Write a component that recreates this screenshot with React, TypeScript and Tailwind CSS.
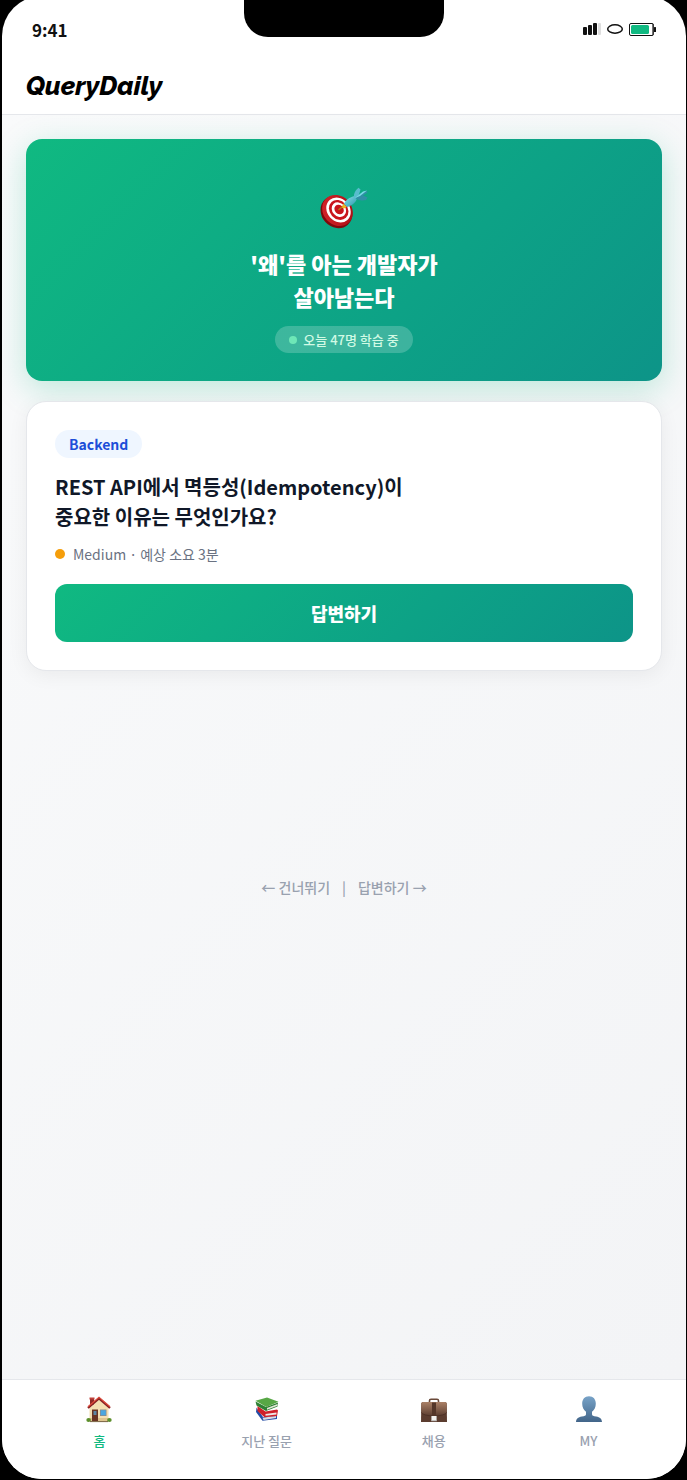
import React from "react";

function DartIcon() {
  return (
    <svg width="50" height="48" viewBox="0 0 50 48" role="img" aria-label="다트">
      <defs>
        <linearGradient id="rim" x1="0" y1="0" x2="1" y2="1">
          <stop offset="0" stopColor="#d8262c" />
          <stop offset="1" stopColor="#a80c12" />
        </linearGradient>
        <linearGradient id="dart" x1="0" y1="0" x2="1" y2="1">
          <stop offset="0" stopColor="#8be3ec" />
          <stop offset="1" stopColor="#2795ab" />
        </linearGradient>
      </defs>
      <ellipse cx="17.5" cy="25" rx="15" ry="17" transform="rotate(-42 17.5 25)" fill="#7e090d" />
      <ellipse cx="18.5" cy="23.5" rx="14.3" ry="16.5" transform="rotate(-42 18.5 23.5)" fill="url(#rim)" />
      <ellipse cx="19.5" cy="23" rx="11.3" ry="13.3" transform="rotate(-42 19.5 23)" fill="#fff" />
      <ellipse cx="19.7" cy="22.9" rx="9" ry="10.7" transform="rotate(-42 19.7 22.9)" fill="#c9151b" />
      <ellipse cx="19.9" cy="22.7" rx="6.6" ry="7.9" transform="rotate(-42 19.9 22.7)" fill="#fff" />
      <ellipse cx="20.1" cy="22.5" rx="4.3" ry="5.2" transform="rotate(-42 20.1 22.5)" fill="#c9151b" />
      <path d="M20 22.5 25 18.5" stroke="#b97b17" strokeWidth="1.6" strokeLinecap="round" />
      <path d="M23 20.6 24.4 16.6 27.8 19.8 25 21.6Z" fill="#f0b41f" />
      <path d="M25 17C26 13.5 31 10 35.5 9L38 11.5C37 15.5 32 19 28.3 20Z" fill="url(#dart)" />
      <path d="M35 10.5C34.5 6.5 36.5 3 39.5 .8L41.5 2.5 39.5 9 36.5 12Z" fill="#58bccd" />
      <path d="M36.5 11.5 41 7 47.5 3.5 48.5 5.5 44 8.5 48.5 10.5 47 13C43 14 39.5 13.5 36.5 11.5Z" fill="#318fa6" />
      <path d="M36 11 44 4.5 48 3.5 41 9Z" fill="#79dbe6" />
    </svg>
  );
}

function HouseIcon() {
  return (
    <svg width="26" height="28" viewBox="1 0 26 28" aria-hidden="true">
      <path d="M5 2h4v7H5Z" fill="#8f2926" />
      <path d="M4.5 1.5h5v2h-5Z" fill="#bf403a" />
      <path d="M4.5 12 14 3.5l9.5 8.5v13h-19Z" fill="#f4dfb3" />
      <path d="M4.5 22h19v3h-19Z" fill="#dfc48f" />
      <path d="M3 12 14 2.5 25 12" fill="none" stroke="#871f20" strokeWidth="2.2" />
      <path d="M3 10.8 14 1.3 25 10.8" fill="none" stroke="#dc4a3c" strokeWidth="1.3" />
      <path d="M7 13.5h6V25H7Z" fill="#693524" />
      <path d="M8.5 15h3v4h-3Z" fill="#5d86a5" />
      <path d="M15 13.5h6.5v6.5H15Z" fill="#8a8a8b" />
      <path d="M15.7 14.2h5.1v5.1h-5.1Z" fill="#4aa6e1" />
      <ellipse cx="3.6" cy="24" rx="2.3" ry="2" fill="#5d8f2c" />
      <ellipse cx="24.4" cy="24" rx="2.3" ry="2" fill="#5d8f2c" />
      <path d="M5 25.6h18" stroke="#775f3c" strokeWidth="1" />
    </svg>
  );
}

function BooksIcon() {
  return (
    <svg width="26" height="28" viewBox="1 0 26 28" aria-hidden="true">
      <path d="M3.5 11.5 3 16 9.5 24.8 24 23v-3L10 21 5 14Z" fill="#254da6" />
      <path d="m9.5 21.8 13.5-1.8v2L10.5 23.9Z" fill="#d9dce3" />
      <path d="m4.5 10 8 5.5 11.5-2 1 1-1 5.5-12.5 1.2L4.5 15Z" fill="#cf2029" />
      <path d="m12.5 18 11-1.4v1.9l-11 1.3Z" fill="#eee7e5" />
      <path d="M2.5 5.5 13 11 25 6.5l-.5 4-11.5 4.5L3.5 9.5Z" fill="#2e8033" />
      <path d="m14 12 10.5-4v1.7l-10.5 4Z" fill="#e4e6d9" />
      <path d="M2.5 4.8 14 1.5 25.5 5.8 13.4 11Z" fill="#57a745" />
    </svg>
  );
}

function BriefcaseIcon() {
  return (
    <svg width="26" height="28" viewBox="1 0 26 28" aria-hidden="true">
      <defs>
        <linearGradient id="leather" x1="0" y1="0" x2="0" y2="1">
          <stop offset="0" stopColor="#aa8066" />
          <stop offset=".55" stopColor="#805c49" />
          <stop offset="1" stopColor="#5b3d30" />
        </linearGradient>
      </defs>
      <path d="M9.5 6.5V4.8Q9.5 3.3 11 3.3h6q1.5 0 1.5 1.5v1.7" fill="none" stroke="#6a4939" strokeWidth="1.6" />
      <path d="M3 6h22q1.5 0 1.7 1.5L27 26H1L1.3 7.5Q1.5 6 3 6Z" fill="#5b3c2f" />
      <path d="M3 6h22q1.5 0 1.7 1.5v9Q25 19.6 14 20 3 19.6 1.3 16.5v-9Q1.5 6 3 6Z" fill="url(#leather)" />
      <path d="M1.4 16.5Q3 19.6 14 20q11-.4 12.6-3.5" fill="none" stroke="#462b21" strokeWidth=".7" />
      <path d="M12 6.5h4v13h-4Z" fill="#543629" />
      <path d="M11.2 20h5.6v5.2h-5.6Z" fill="#c5c2c0" />
      <path d="M12 20h4v4h-4Z" fill="#f3f1ef" />
    </svg>
  );
}

function PersonIcon() {
  return (
    <svg width="26" height="28" viewBox="1 0 26 28" aria-hidden="true">
      <defs>
        <linearGradient id="person" x1="0" y1="0" x2="0" y2="1">
          <stop offset="0" stopColor="#78a3c8" />
          <stop offset="1" stopColor="#426589" />
        </linearGradient>
      </defs>
      <path
        d="M14 .3c4.4 0 6.8 3 6.8 7.4 0 3.4-1.500 6.400-3.800 8.100v2.400c0 1.400 1.500 1.800 4.200 2.400 3.900.8 5.500 2.100 5.800 5.400H1c.3-3.300 1.900-4.600 5.800-5.400 2.700-.6 4.200-1 4.200-2.400v-2.400c-2.300-1.700-3.800-4.700-3.800-8.100C7.200 3.300 9.600.3 14 .3Z"
        fill="url(#person)"
      />
    </svg>
  );
}

function StatusIcons() {
  return (
    <svg width="73" height="13" viewBox="0 0 73 13" role="img" aria-label="신호, 와이파이, 배터리">
      <rect x="0" y="4" width="4" height="8" rx="1" fill="#111" />
      <rect x="5" y="2" width="4" height="10" rx="1" fill="#111" />
      <rect x="10" y="0" width="4" height="12" rx="1" fill="#111" />
      <rect x="15" y="0" width="3" height="12" rx="1" fill="#dedede" />
      <ellipse cx="32" cy="6" rx="7.3" ry="4.2" fill="none" stroke="#111" strokeWidth="1.5" />
      <rect x="46.5" y=".5" width="24" height="12" rx="1.5" fill="#fff" stroke="#111" />
      <rect x="48" y="2" width="18" height="9" rx="1.5" fill="#10b981" />
      <path d="M70 1v11" stroke="#444" strokeWidth="1.5" />
      <rect x="71" y="4" width="2" height="5" rx=".5" fill="#111" />
    </svg>
  );
}

const tabs = [
  { label: "홈", Icon: HouseIcon, active: true },
  { label: "지난 질문", Icon: BooksIcon, active: false },
  { label: "채용", Icon: BriefcaseIcon, active: false },
  { label: "MY", Icon: PersonIcon, active: false },
];

export default function App() {
  return (
    <div className="flex min-h-screen overflow-hidden bg-black pr-px pb-px pl-0.5 font-['Noto_Sans_CJK_KR',sans-serif]">
      <div className="relative -mt-1 flex flex-1 flex-col overflow-hidden rounded-[40px] bg-white">
        <div className="absolute top-0 left-1/2 h-[41px] w-[200px] -translate-x-1/2 rounded-b-3xl bg-black" />

        <div className="flex h-[60px] items-center justify-between px-[30px] pt-[7px]">
          <span className="text-[17px] font-bold text-[#111]">9:41</span>
          <StatusIcons />
        </div>

        <header className="flex h-[59px] items-center border-b border-gray-200 px-6">
          <h1 className="pt-0.5 font-['Raleway','Lato',sans-serif] text-[26px] leading-8 font-extrabold text-black italic">
            QueryDaily
          </h1>
        </header>

        <main className="flex flex-1 flex-col bg-linear-135 from-[#f9fafb] to-[#f3f4f6] p-6">
          <section className="flex flex-col items-center rounded-2xl bg-linear-135 from-[#10b981] to-[#0d9488] px-6 pt-12 pb-7 text-center shadow-[0_8px_32px_rgba(16,185,129,0.25)]">
            <DartIcon />
            <h2 className="mt-3 text-[22px] leading-[33px] font-extrabold text-white">
              &apos;왜&apos;를 아는 개발자가
              <br />
              살아남는다
            </h2>
            <p className="mt-[13px] flex items-center gap-1.5 rounded-full bg-white/20 px-3.5 py-1 text-[13px] leading-[19px] font-medium text-[#d1fae5]">
              <span className="size-2 rounded-full bg-[#6ee7b7]" />
              오늘 47명 학습 중
            </p>
          </section>

          <article className="mt-5 flex flex-col rounded-[20px] border border-gray-200 bg-white p-7 shadow-[0_4px_20px_rgba(0,0,0,0.06)]">
            <span className="self-start rounded-full bg-[#eff6ff] px-3.5 py-1 text-sm leading-5 font-bold text-[#1d4ed8]">
              Backend
            </span>
            <h3 className="mt-3.5 text-xl leading-[30px] font-bold text-gray-900">
              REST API에서 멱등성(Idempotency)이
              <br />
              중요한 이유는 무엇인가요?
            </h3>
            <p className="mt-3 flex items-center gap-2 text-sm leading-5 text-gray-500">
              <span className="size-2.5 rounded-full bg-[#f59e0b]" />
              Medium · 예상 소요 3분
            </p>
            <button
              type="button"
              className="mt-5 h-[58px] rounded-xl bg-linear-135 from-[#10b981] to-[#0d9488] text-lg font-extrabold text-white"
            >
              답변하기
            </button>
          </article>

          <div className="mt-[206px] flex justify-center gap-3 text-sm leading-5 font-medium text-gray-400">
            <button type="button">← 건너뛰기</button>
            <span>|</span>
            <button type="button">답변하기 →</button>
          </div>
        </main>

        <nav className="flex h-[100px] items-start justify-around border-t border-gray-200 bg-white px-5 pt-4">
          {tabs.map(({ label, Icon, active }) => (
            <a
              key={label}
              href="#"
              className={
                active
                  ? "flex flex-col items-center gap-2 text-[13px] leading-[18px] font-medium text-[#10b981]"
                  : "flex flex-col items-center gap-2 text-[13px] leading-[18px] font-medium text-gray-400"
              }
            >
              <Icon />
              {label}
            </a>
          ))}
        </nav>
      </div>
    </div>
  );
}
